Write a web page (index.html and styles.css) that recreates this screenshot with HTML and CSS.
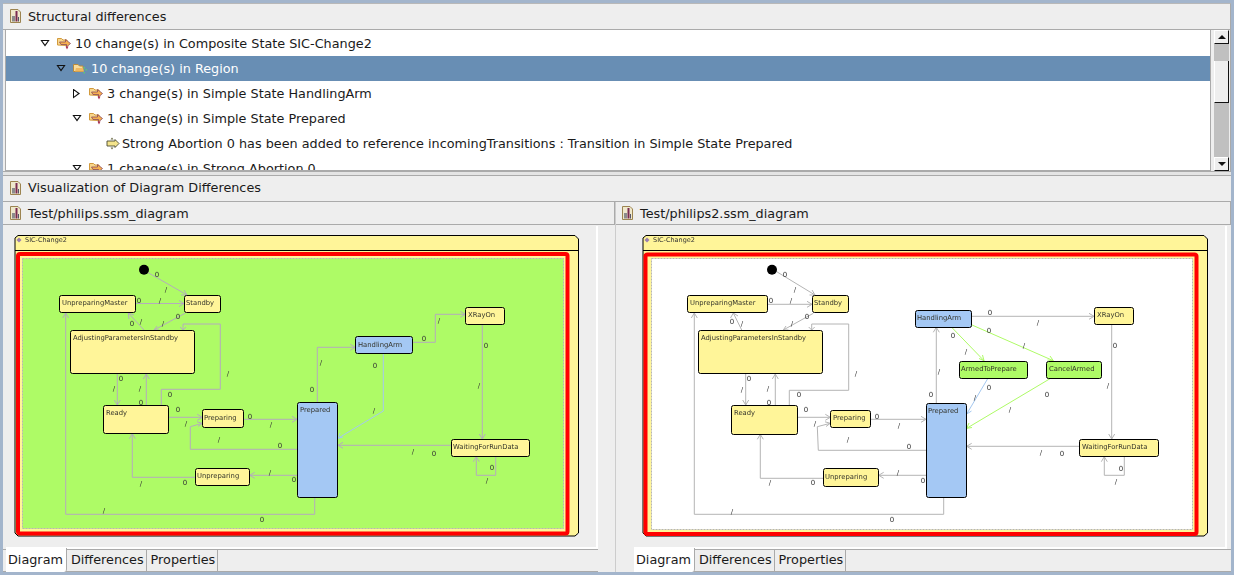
FILE: index.html

```html
<!DOCTYPE html>
<html lang="en">
<head>
  <meta charset="UTF-8" />
  <title>Structural differences</title>
  <link rel="stylesheet" href="styles.css">
</head>
<body>
  <svg class="defs" width="0" height="0">
    <defs>
      <symbol id="doc" viewBox="0 0 11 14">
        <path d="M.5.5H8L10.500 3V13.500H.5Z" fill="#efe8cc" stroke="#9c8450"/>
        <path d="M2 7h3v5.500H2Z" fill="#8c8c8c"/>
        <path d="M5.500 2h2v10.500h-2Z" fill="#7a2a50"/>
        <path d="M8 8h1v4.500H8Z" fill="#55556a"/>
      </symbol>
      <symbol id="change" viewBox="0 0 14 13">
        <path d="M.5 1.500H4.500L6 3H10V8.500L.5 8Z" fill="#f8d68c" stroke="#d29a3c"/>
        <path d="M2.500 5H8.500V2.500L13.500 6.500L9.500 10V7.500H4Z" fill="#f6b050" stroke="#7c3a56" stroke-width=".7"/>
        <path d="M8.500 9.500L10 12.500L11.500 9.500" fill="#a83050"/>
      </symbol>
      <symbol id="region" viewBox="0 0 14 13">
        <path d="M.5 2.500H5L6.500 4H10V9.500H.5Z" fill="#f8dc9c" stroke="#b98a3c"/>
        <path d="M3 6H10L11 9.500H2Z" fill="#f0b860"/>
        <path d="M10.500 5h1.500v1.500h-1.500ZM12.500 7h1.500v1.500h-1.500ZM10.500 10h1.500v1.500h-1.500Z" fill="#5cc878"/>
      </symbol>
      <symbol id="added" viewBox="0 0 14 13">
        <path d="M6 .5L7.500 2.500H4.500ZM6 12.500L4.500 10.500H7.500Z" fill="#6c6c48"/>
        <path d="M1 4H9V2.500L13 6.500L9 10.500V9H1Z" fill="#f4e48c" stroke="#4a4a34" stroke-width=".9"/>
      </symbol>
    </defs>
  </svg>

  <section class="view view-top">
    <header class="title">
      <svg class="ico-doc"><use href="#doc"/></svg>
      <span>Structural differences</span>
    </header>
    <div class="tree-wrap">
      <ul class="tree">
        <li class="row lvl-1"><i class="tw open"></i><svg class="ico"><use href="#change"/></svg>10 change(s) in Composite State SIC-Change2</li>
        <li class="row lvl-2 selected"><i class="tw open"></i><svg class="ico"><use href="#region"/></svg>10 change(s) in Region</li>
        <li class="row lvl-3"><i class="tw closed"></i><svg class="ico"><use href="#change"/></svg>3 change(s) in Simple State HandlingArm</li>
        <li class="row lvl-3"><i class="tw open"></i><svg class="ico"><use href="#change"/></svg>1 change(s) in Simple State Prepared</li>
        <li class="row lvl-4"><svg class="ico ico-leaf"><use href="#added"/></svg>Strong Abortion 0 has been added to reference incomingTransitions : Transition in Simple State Prepared</li>
        <li class="row lvl-3"><i class="tw open"></i><svg class="ico"><use href="#change"/></svg>1 change(s) in Strong Abortion 0</li>
      </ul>
      <div class="scrollbar">
        <div class="sb-btn"><i class="sb-up"></i></div>
        <div class="sb-track"><div class="sb-thumb"></div></div>
        <div class="sb-btn"><i class="sb-down"></i></div>
      </div>
    </div>
  </section>

  <div class="sash"></div>

  <section class="view view-bottom">
    <header class="title title-vis">
      <svg class="ico-doc"><use href="#doc"/></svg>
      <span>Visualization of Diagram Differences</span>
    </header>
    <div class="split">

      <div class="editor editor-left">
        <header class="title title-file">
          <svg class="ico-doc"><use href="#doc"/></svg>
          <span>Test/philips.ssm_diagram</span>
        </header>
        <div class="canvas">
          <svg class="diagram" viewBox="6 226 590 321" width="590" height="321">
            <path class="frame" d="M18 235.500H575L578.500 239V533L575 536H18L15 533V238Z"/>
            <path class="frame-line" d="M15 250.500H578.500"/>
            <path class="sic" d="M19 237.500L21.500 240L19 242.500L16.500 240Z"/>
            <text class="lbl-s" x="25" y="242">SIC-Change2</text>
            <rect class="red" x="18" y="254" width="549.500" height="279.500" rx="2"/>
            <rect class="region green" x="22.500" y="258.500" width="541" height="270"/>

            <g class="edges">
              <path d="M147 272L187 295"/>
              <path d="M136 303.500H184"/>
              <path d="M185 313.300L154 330"/>
              <path d="M144 330L128.300 313"/>
              <path d="M183 330V324H220.300V389.300H161.300V405"/>
              <path d="M117.300 374V405"/>
              <path d="M146.300 405V374"/>
              <path d="M314.700 497.300V514.300H65.700V313"/>
              <path d="M168.700 417.300H202.300"/>
              <path d="M243.700 419.300H297"/>
              <path d="M297 449.300H190.300V426.700L202.300 423.300"/>
              <path d="M297 475.300H249.700"/>
              <path d="M195 477.300H132.300V433.700"/>
              <path d="M317.300 402V347.300H355.300"/>
              <path d="M412.700 342.300H435.300V314.300H465.300"/>
              <path d="M482.300 324.700V439"/>
              <path d="M451 445.300H338"/>
              <path d="M495.700 456.700V475.300H476.300V456.700"/>
            </g>
            <path class="edge-blue" d="M383.300 353.700V411L338 438.300"/>
            <g class="heads">
              <path d="M181 295L187 295L184 290"/>
              <path d="M179 300.500L184 303.500L179 306.500"/>
              <path d="M159 330L154 330L157 326"/>
              <path d="M128.300 313L134 315M128.300 313L129 319"/>
              <path d="M180 327L183 330L186 327"/>
              <path d="M114.300 400L117.300 405L120.300 400"/>
              <path d="M143.300 379L146.300 374L149.300 379"/>
              <path d="M62.700 318L65.700 313L68.700 318"/>
              <path d="M197.300 414.300L202.300 417.300L197.300 420.300"/>
              <path d="M292 416.300L297 419.300L292 422.300"/>
              <path d="M197 421.800L202.300 423.300L198 426.500"/>
              <path d="M254.700 472.300L249.700 475.300L254.700 478.300"/>
              <path d="M129.300 438.700L132.300 433.700L135.300 438.700"/>
              <path d="M350.300 344.300L355.300 347.300L350.300 350.300"/>
              <path d="M460.300 311.300L465.300 314.300L460.300 317.300"/>
              <path d="M479.300 434L482.300 439L485.300 434"/>
              <path d="M343 442.300L338 445.300L343 448.300"/>
              <path d="M473.300 461.700L476.300 456.700L479.300 461.700"/>
            </g>
            <path class="head-blue" d="M343 437L338 438.300L340 433"/>

            <circle class="init" cx="144" cy="269.700" r="5"/>
            <g class="st-y">
              <rect x="59.500" y="295.500" width="76" height="17" rx="2"/>
              <rect x="184.500" y="295.500" width="36" height="17" rx="2"/>
              <rect x="70.500" y="330.500" width="124" height="43" rx="2"/>
              <rect x="103.500" y="405.500" width="65" height="28" rx="2"/>
              <rect x="202.500" y="409.500" width="41" height="18" rx="2"/>
              <rect x="195.500" y="468.500" width="54" height="17" rx="2"/>
              <rect x="451.500" y="439.500" width="78" height="17" rx="2"/>
              <rect x="465.500" y="307.500" width="39" height="17" rx="2"/>
            </g>
            <g class="st-b">
              <rect x="297.500" y="402.500" width="40" height="95" rx="2"/>
              <rect x="355.500" y="336.500" width="57" height="17" rx="2"/>
            </g>
            <g class="names">
              <text x="62" y="305">UnpreparingMaster</text>
              <text x="186" y="305">Standby</text>
              <text x="73" y="340">AdjustingParametersInStandby</text>
              <text x="106" y="415">Ready</text>
              <text x="204" y="420">Preparing</text>
              <text x="197" y="478">Unpreparing</text>
              <text x="300" y="412">Prepared</text>
              <text x="453" y="449">WaitingForRunData</text>
              <text x="358" y="347">HandlingArm</text>
              <text x="468" y="317">XRayOn</text>
            </g>
            <g class="lbls">
              <text x="157" y="277">0</text><text x="166" y="292">/</text>
              <text x="139" y="303">0</text><text x="160" y="303">/</text>
              <text x="178" y="319">0</text><text x="163" y="326">/</text>
              <text x="132" y="326">0</text><text x="141" y="324">/</text>
              <text x="228" y="376">/</text><text x="170" y="397">0</text>
              <text x="121" y="381">0</text><text x="114" y="391">/</text>
              <text x="140" y="391">/</text><text x="141" y="405">0</text>
              <text x="178" y="412">0</text><text x="186" y="426">/</text>
              <text x="250" y="419">0</text><text x="271" y="427">/</text>
              <text x="219" y="442">/</text><text x="280" y="448">0</text>
              <text x="270" y="475">/</text><text x="294" y="482">0</text>
              <text x="185" y="485">0</text><text x="141" y="486">/</text>
              <text x="104" y="513">/</text><text x="262" y="522">0</text>
              <text x="424" y="341">0</text><text x="439" y="323">/</text>
              <text x="486" y="348">0</text><text x="479" y="388">/</text>
              <text x="375" y="368">0</text><text x="321" y="365">/</text>
              <text x="312" y="392">0</text><text x="374" y="413">/</text>
              <text x="413" y="454">/</text><text x="434" y="456">0</text>
              <text x="492" y="470">0</text><text x="487" y="483">/</text>
            </g>
          </svg>
        </div>
        <nav class="tabs">
          <span class="tab active">Diagram</span>
          <span class="tab">Differences</span>
          <span class="tab">Properties</span>
        </nav>
      </div>

      <div class="editor editor-right">
        <header class="title title-file">
          <svg class="ico-doc"><use href="#doc"/></svg>
          <span>Test/philips2.ssm_diagram</span>
        </header>
        <div class="canvas">
          <svg class="diagram" viewBox="634 226 591 321" width="591" height="321">
            <path class="frame" d="M646 235.500H1204L1207.500 239V533L1204 536H646L643 533V238Z"/>
            <path class="frame-line" d="M643 250.500H1207.500"/>
            <path class="sic" d="M647 237.500L649.500 240L647 242.500L644.500 240Z"/>
            <text class="lbl-s" x="653" y="242">SIC-Change2</text>
            <rect class="red" x="645.500" y="254.500" width="551" height="279.500" rx="2"/>
            <rect class="region white" x="651.500" y="258.500" width="541" height="271"/>

            <g class="edges edges-w">
              <path d="M776.700 271.700L815 295"/>
              <path d="M767.300 304.300H812"/>
              <path d="M813.300 313.300L783.300 330"/>
              <path d="M741.700 330L733.300 313"/>
              <path d="M811.700 330V324H848.700V390.300H789.300V405"/>
              <path d="M745.700 374V405"/>
              <path d="M775.300 405V374"/>
              <path d="M943.700 497.300V514.300H694.300V313"/>
              <path d="M797.300 417.300H830.300"/>
              <path d="M870.700 419.300H926"/>
              <path d="M926 450.300H818.300L817.300 426.700L830.300 423.300"/>
              <path d="M926 475.300H878.700"/>
              <path d="M823 478.300H760.300V434.300"/>
              <path d="M936.300 403V327.300"/>
              <path d="M972 316.300H1094"/>
              <path d="M1111.700 324.700V439"/>
              <path d="M1079.300 446.300H966.700"/>
              <path d="M1124.300 456.700V475.300H1104.300V456.700"/>
            </g>
            <g class="edge-green">
              <path d="M951.700 327.300L984 360.700"/>
              <path d="M972 325L1053.300 360.700"/>
              <path d="M1050 378.700L966.700 428.300"/>
            </g>
            <path class="edge-blue" d="M987.700 378.700L966.700 414"/>
            <g class="heads heads-w">
              <path d="M809.500 295L815 295L812 290"/>
              <path d="M807 301.300L812 304.300L807 307.300"/>
              <path d="M788.500 330L783.300 330L786 326"/>
              <path d="M730.500 318L733.300 313L738 316"/>
              <path d="M808.700 327L811.700 330L814.700 327"/>
              <path d="M742.700 400L745.700 405L748.700 400"/>
              <path d="M772.300 379L775.300 374L778.300 379"/>
              <path d="M691.300 318L694.300 313L697.300 318"/>
              <path d="M825.300 414.300L830.300 417.300L825.300 420.300"/>
              <path d="M921 416.300L926 419.300L921 422.300"/>
              <path d="M825 421.800L830.300 423.300L826 426.500"/>
              <path d="M883.700 472.300L878.700 475.300L883.700 478.300"/>
              <path d="M757.300 439.300L760.300 434.300L763.300 439.300"/>
              <path d="M933.300 332.300L936.300 327.300L939.300 332.300"/>
              <path d="M1089 313.300L1094 316.300L1089 319.300"/>
              <path d="M1108.700 434L1111.700 439L1114.700 434"/>
              <path d="M971.700 443.300L966.700 446.300L971.700 449.300"/>
              <path d="M1101.300 461.700L1104.300 456.700L1107.300 461.700"/>
            </g>
            <g class="head-green">
              <path d="M979 358.500L984 360.700L982.500 355"/>
              <path d="M1047.500 360L1053.300 360.700L1050 356"/>
              <path d="M972 427.500L966.700 428.300L969 423"/>
            </g>
            <path class="head-blue" d="M966.700 408.500V414L971.500 411"/>

            <circle class="init" cx="772" cy="269.700" r="5"/>
            <g class="st-y">
              <rect x="687.500" y="295.500" width="80" height="17" rx="2"/>
              <rect x="812.500" y="295.500" width="36" height="17" rx="2"/>
              <rect x="698.500" y="330.500" width="124" height="43" rx="2"/>
              <rect x="731.500" y="405.500" width="66" height="29" rx="2"/>
              <rect x="830.500" y="410.500" width="40" height="17" rx="2"/>
              <rect x="823.500" y="468.500" width="55" height="18" rx="2"/>
              <rect x="1079.500" y="439.500" width="79" height="17" rx="2"/>
              <rect x="1094.500" y="307.500" width="39" height="17" rx="2"/>
            </g>
            <g class="st-b">
              <rect x="926.500" y="403.500" width="40" height="94" rx="2"/>
              <rect x="915.500" y="310.500" width="56" height="17" rx="2"/>
            </g>
            <g class="st-g">
              <rect x="959.500" y="361.500" width="68" height="17" rx="2"/>
              <rect x="1046.500" y="361.500" width="55" height="17" rx="2"/>
            </g>
            <g class="names">
              <text x="690" y="305">UnpreparingMaster</text>
              <text x="814" y="305">Standby</text>
              <text x="701" y="340">AdjustingParametersInStandby</text>
              <text x="734" y="415">Ready</text>
              <text x="833" y="420">Preparing</text>
              <text x="825" y="479">Unpreparing</text>
              <text x="928" y="413">Prepared</text>
              <text x="1082" y="449">WaitingForRunData</text>
              <text x="917" y="320">HandlingArm</text>
              <text x="1097" y="317">XRayOn</text>
              <text x="961" y="371">ArmedToPrepare</text>
              <text x="1049" y="371">CancelArmed</text>
            </g>
            <g class="lbls">
              <text x="785" y="277">0</text><text x="795" y="292">/</text>
              <text x="771" y="303">0</text><text x="791" y="303">/</text>
              <text x="807" y="319">0</text><text x="792" y="326">/</text>
              <text x="732" y="324">0</text><text x="742" y="326">/</text>
              <text x="856" y="376">/</text><text x="799" y="397">0</text>
              <text x="749" y="381">0</text><text x="742" y="392">/</text>
              <text x="768" y="391">/</text><text x="769" y="405">0</text>
              <text x="931" y="397">0</text><text x="939" y="374">/</text>
              <text x="990" y="315">0</text><text x="1038" y="325">/</text>
              <text x="989" y="333">0</text><text x="953" y="338">0</text>
              <text x="966" y="354">/</text><text x="1024" y="348">/</text>
              <text x="989" y="390">0</text><text x="975" y="400">/</text>
              <text x="1047" y="397">0</text><text x="1115" y="348">0</text>
              <text x="1108" y="388">/</text>
              <text x="806" y="412">0</text><text x="815" y="426">/</text>
              <text x="877" y="419">0</text><text x="899" y="428">/</text>
              <text x="848" y="442">/</text><text x="909" y="449">0</text>
              <text x="898" y="475">/</text><text x="923" y="483">0</text>
              <text x="813" y="485">0</text><text x="770" y="485">/</text>
              <text x="732" y="514">/</text><text x="892" y="522">0</text>
              <text x="1010" y="412">/</text><text x="1041" y="455">/</text>
              <text x="1062" y="456">0</text><text x="1121" y="471">0</text>
              <text x="1116" y="484">/</text>
            </g>
          </svg>
        </div>
        <nav class="tabs">
          <span class="tab active">Diagram</span>
          <span class="tab">Differences</span>
          <span class="tab">Properties</span>
        </nav>
      </div>

    </div>
  </section>
</body>
</html>
```

FILE: styles.css

```css
* {
  box-sizing: border-box;
}
html, body {
  height: 100%;
}
body {
  margin: 0;
  height: 575px;
  overflow: hidden;
  padding: 3px;
  background: #a3b5cc;
  font-family: "DejaVu Sans", sans-serif;
  font-size: 12.800px;
  color: #1a1a1a;
  display: flex;
  flex-direction: column;
}
.defs {
  position: absolute;
}
.view {
  background: #eeeeee;
}
.view-top {
  height: 168px;
  border-top: 1px solid #b8b8b8;
  border-right: 1px solid #aaa;
  display: flex;
  flex-direction: column;
}
.title {
  height: 26px;
  flex: none;
  display: flex;
  align-items: center;
  gap: 7px;
  padding: 0 0 1px 7px;
  background: #eeeeee;
  border-bottom: 1px solid #aaa;
}
.ico-doc {
  width: 11px;
  height: 14px;
  flex: none;
}
.tree-wrap {
  flex: 1;
  display: flex;
  min-height: 0;
  background: #eeeeee;
}
.tree {
  list-style: none;
  margin: 0 3px 0 2px;
  padding: 1px 0 0;
  flex: 1;
  background: #fff;
  overflow: hidden;
  border-left: 1px solid #aaa;
  border-right: 1px solid #aaa;
  border-bottom: 1px solid #aaa;
}
.row {
  height: 25px;
  flex: none;
  display: flex;
  align-items: center;
  white-space: nowrap;
}
.row.selected {
  background: #688eb4;
  color: #fff;
}
.lvl-1 { padding-left: 34px; }
.lvl-2 { padding-left: 50px; }
.lvl-3 { padding-left: 66px; }
.lvl-4 { padding-left: 100px; }
.tw {
  width: 17px;
  flex: none;
  display: block;
  height: 8px;
  position: relative;
}
.tw.open::before {
  content: "";
  position: absolute;
  left: 0;
  top: 0;
  width: 10px;
  height: 7px;
  background: #111;
  clip-path: polygon(0 0, 100% 0, 50% 100%);
}
.tw.open::after {
  content: "";
  position: absolute;
  left: 2px;
  top: 1px;
  width: 6px;
  height: 4px;
  background: #fff;
  clip-path: polygon(0 0, 100% 0, 50% 100%);
}
.tw.closed::before {
  content: "";
  position: absolute;
  left: 1px;
  top: -1px;
  width: 7px;
  height: 10px;
  background: #111;
  clip-path: polygon(0 0, 100% 50%, 0 100%);
}
.tw.closed::after {
  content: "";
  position: absolute;
  left: 2px;
  top: 1px;
  width: 4px;
  height: 6px;
  background: #fff;
  clip-path: polygon(0 0, 100% 50%, 0 100%);
}
.selected .tw.open::after {
  background: #688eb4;
}
.ico {
  width: 14px;
  height: 13px;
  flex: none;
  margin-right: 4px;
}
.ico-leaf {
  margin-right: 2px;
}
.scrollbar {
  width: 15px;
  margin-right: 1px;
  flex: none;
  display: flex;
  flex-direction: column;
  background: #c0c0c0;
}
.sb-btn {
  height: 14px;
  flex: none;
  background: #eeeeee;
  border-right: 1px solid #111;
  border-bottom: 1px solid #111;
  border-left: 1px solid #fff;
  border-top: 1px solid #fff;
  display: flex;
  align-items: center;
  justify-content: center;
}
.sb-up, .sb-down {
  width: 0;
  height: 0;
  border-left: 4px solid transparent;
  border-right: 4px solid transparent;
}
.sb-up {
  border-bottom: 4px solid #111;
}
.sb-down {
  border-top: 4px solid #111;
}
.sb-track {
  flex: 1;
  padding-top: 17px;
}
.sb-thumb {
  height: 42px;
  background: #eeeeee;
  border-right: 1px solid #111;
  border-bottom: 1px solid #111;
  border-left: 1px solid #fff;
}
.sash {
  height: 5px;
  flex: none;
  background: #e4e4e4;
  border-top: 1px solid #aaa;
  border-bottom: 1px solid #aaa;
}
.view-bottom {
  flex: 1;
  min-height: 0;
  display: flex;
  flex-direction: column;
}
.title-vis {
  padding: 0 0 2px 7px;
}
.split {
  flex: 1;
  min-height: 0;
  display: flex;
}
.editor {
  display: flex;
  flex-direction: column;
  min-width: 0;
}
.editor-left {
  width: 612px;
}
.editor-right {
  flex: 1;
  border-left: 1px solid #ccc;
}
.title-file {
  height: 23px;
  padding: 0 0 0 7px;
  border-right: 1px solid #aaa;
}
.editor-right .title-file {
  padding-left: 6px;
}
.editor-left .canvas {
  padding-left: 3px;
}
.editor-right .canvas {
  padding-left: 18px;
}
.canvas {
  height: 324px;
  flex: none;
  overflow: hidden;
}
.diagram {
  display: block;
  background: #eeeeee;
  border-right: 2px solid #fff;
  border-bottom: 2px solid #fff;
  box-sizing: content-box;
  margin-top: 1px;
}
.frame {
  fill: #fff599;
  stroke: #000;
}
.frame-line {
  stroke: #000;
  fill: none;
}
.sic {
  fill: #9a7fb0;
}
.lbl-s {
  font-size: 6.500px;
  fill: #333;
  filter: blur(.3px);
}
.red {
  fill: none;
  stroke: #ff0000;
  stroke-width: 4px;
}
.region {
  stroke: #b5b5b5;
  stroke-dasharray: 2 1;
}
.green {
  fill: #aefb66;
}
.white {
  fill: #fff;
}
.edges, .heads {
  fill: none;
  stroke: #b4acbc;
  filter: blur(.2px);
}
.edges-w, .heads-w {
  stroke: #b4b4b4;
}
.edge-green, .head-green {
  fill: none;
  stroke: #aefb66;
}
.edge-blue, .head-blue {
  fill: none;
  stroke: #a4c8f0;
}
.init {
  fill: #000;
}
.st-y rect {
  fill: #fff599;
  stroke: #000;
}
.st-b rect {
  fill: #a4c8f4;
  stroke: #000;
}
.st-g rect {
  fill: #aefb66;
  stroke: #000;
}
.names text {
  font-size: 6.800px;
  fill: #33332a;
}
.lbls text {
  font-size: 7px;
  fill: #333;
  text-anchor: middle;
}
.names, .lbls {
  filter: blur(.3px);
}
.tabs {
  height: 23px;
  flex: none;
  display: flex;
  align-items: stretch;
  padding-left: 3px;
  border-top: 1px solid #aaa;
  border-bottom: 1px solid #aaa;
  width: 595px;
}
.editor-right .tabs {
  margin-left: 18px;
  width: auto;
  padding-left: 0;
}
.tab {
  padding: 0 2px 2px 4px;
  display: flex;
  align-items: center;
  border-right: 1px solid #aaa;
}
.tab.active {
  background: #fff;
  padding: 0 3px 1px 2px;
  margin-top: -2px;
  margin-bottom: -1px;
  border-radius: 0 0 3px 0;
}
```
